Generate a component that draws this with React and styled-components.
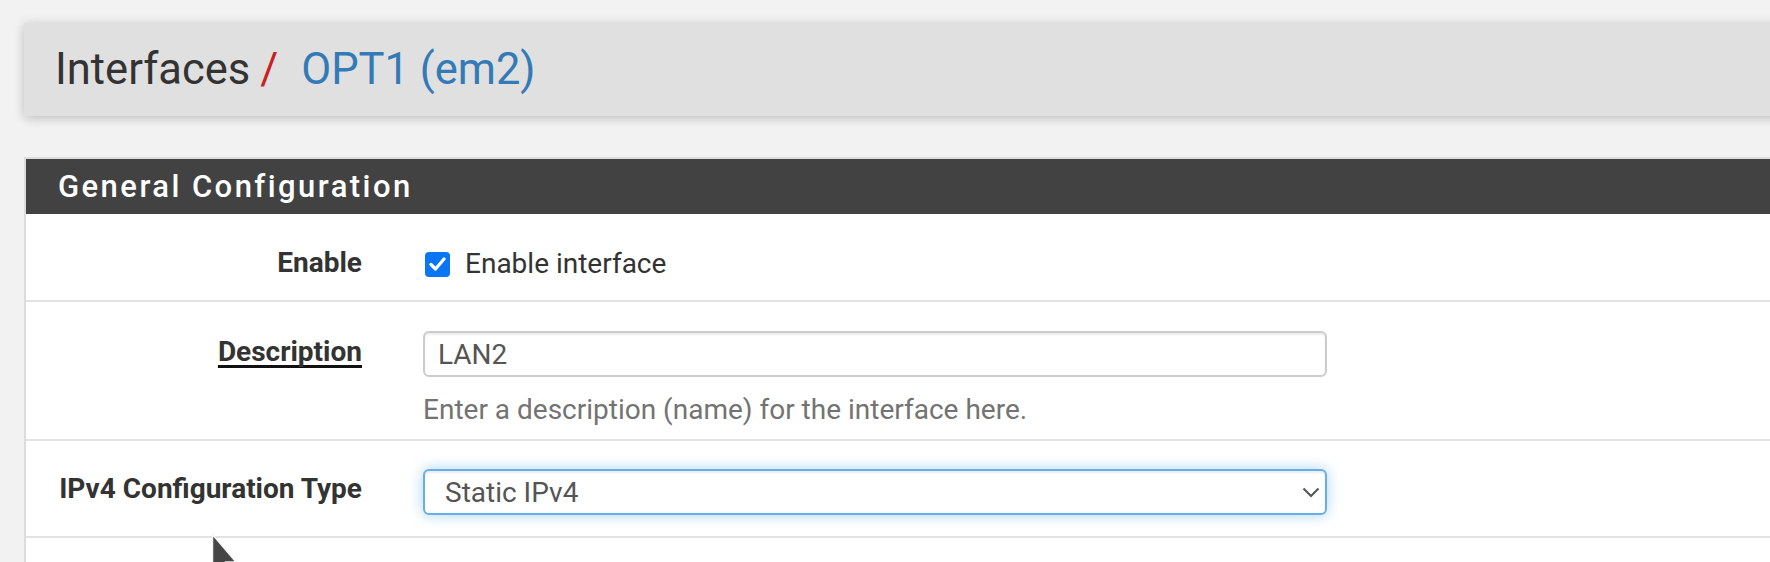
import React from "react";
import styled, { createGlobalStyle } from "styled-components";

const GlobalStyle = createGlobalStyle`
  html, body {
    margin: 0;
    padding: 0;
    background: #f2f2f2;
    overflow: hidden;
    font-family: Roboto, "Liberation Sans", Arial, sans-serif;
  }
  * { box-sizing: border-box; }
`;

const Page = styled.div`
  position: relative;
  width: 100vw;
  height: 562px;
  overflow: hidden;
  padding-top: 23px;
`;

const Content = styled.div`
  margin-left: 24px;
  width: 1900px;
`;

const Breadcrumb = styled.div`
  height: 93px;
  background: #e0e0e0;
  box-shadow: 0 2px 10px rgba(0, 0, 0, 0.22);
  display: flex;
  align-items: center;
  padding-left: 31px;
  font-size: 43.5px;
  font-weight: 400;
  color: #333;
`;

const Crumb = styled.span`
  color: ${(p) => p.$color || "#333"};
`;

const Sep = styled.span`
  color: #c9211e;
  margin: 0 23px 0 10px;
`;

const Panel = styled.div`
  margin-top: 41px;
  border: 2px solid #dcdcdc;
  border-right: none;
  background: #fff;
`;

const PanelHeading = styled.div`
  height: 55px;
  background: #424242;
  display: flex;
  align-items: center;
  padding-left: 32px;
`;

const PanelTitle = styled.h2`
  margin: 0;
  color: #fff;
  font-size: 31px;
  font-weight: 500;
  letter-spacing: 2.45px;
`;

const PanelBody = styled.div`
  padding-bottom: 60px;
`;

const FormRow = styled.div`
  display: grid;
  grid-template-columns: 367px 904px;
  padding-top: ${(p) => p.$pt}px;
  padding-bottom: ${(p) => p.$pb}px;
  border-bottom: 2px solid #e2e2e2;
`;

const Label = styled.div`
  text-align: right;
  padding-right: 31px;
  padding-top: ${(p) => p.$pt || 0}px;
  font-size: 28px;
  line-height: 40px;
  font-weight: 700;
  color: #333;
`;

const Underlined = styled.span`
  text-decoration: underline;
  text-decoration-thickness: 2.5px;
  text-underline-offset: 4px;
  text-decoration-skip-ink: none;
  text-decoration-color: #111;
`;

const Control = styled.div`
  padding-left: 30px;
  display: flex;
  flex-direction: column;
`;

const CheckLine = styled.label`
  display: flex;
  align-items: center;
  height: 40px;
  gap: 15px;
  font-size: 28px;
  color: #333;
`;

const CheckBox = styled.span`
  width: 25px;
  height: 25px;
  margin-left: 2px;
  margin-top: 2px;
  border-radius: 4px;
  background: #0b76f4;
  display: inline-flex;
  align-items: center;
  justify-content: center;
`;

const TextInput = styled.input`
  width: 904px;
  height: 46px;
  border: 2px solid #cccccc;
  border-radius: 6px;
  padding: 0 13px;
  font-family: inherit;
  font-size: 28px;
  color: #555;
  background: #fff;
  box-shadow: inset 0 2px 2px rgba(0, 0, 0, 0.075);
  outline: none;
`;

const HelpText = styled.div`
  margin-top: 13px;
  font-size: 28px;
  line-height: 40px;
  color: #737373;
`;

const SelectWrap = styled.div`
  position: relative;
  width: 904px;
  height: 46px;
`;

const Select = styled.select`
  appearance: none;
  width: 100%;
  height: 46px;
  border: 2px solid #66afe9;
  border-radius: 6px;
  padding: 0 0 0 20px;
  font-family: inherit;
  font-size: 28px;
  color: #555;
  background: #fff;
  box-shadow: inset 0 2px 2px rgba(0, 0, 0, 0.075), 0 0 14px rgba(102, 175, 233, 0.55);
  outline: none;
`;

const Chevron = styled.svg`
  position: absolute;
  right: 7px;
  top: 18px;
  pointer-events: none;
`;

const Cursor = styled.svg`
  position: absolute;
  left: 211px;
  top: 533px;
`;

export default function App() {
  return (
    <>
      <GlobalStyle />
      <Page>
        <Content>
          <Breadcrumb>
            <Crumb>Interfaces</Crumb>
            <Sep>/</Sep>
            <Crumb $color="#337ab7">OPT1 (em2)</Crumb>
          </Breadcrumb>
          <Panel>
            <PanelHeading>
              <PanelTitle>General Configuration</PanelTitle>
            </PanelHeading>
            <PanelBody>
              <FormRow $pt={29} $pb={17}>
                <Label>Enable</Label>
                <Control>
                  <CheckLine>
                    <CheckBox>
                      <svg width="17" height="14" viewBox="0 0 17 14">
                        <path d="M2 7.5 L6.5 12 L15 2" fill="none" stroke="#fff" strokeWidth="3.2" strokeLinecap="round" strokeLinejoin="round" />
                      </svg>
                    </CheckBox>
                    Enable interface
                  </CheckLine>
                </Control>
              </FormRow>
              <FormRow $pt={29} $pb={9}>
                <Label $pt={1}>
                  <Underlined>Description</Underlined>
                </Label>
                <Control>
                  <TextInput defaultValue="LAN2" readOnly />
                  <HelpText>Enter a description (name) for the interface here.</HelpText>
                </Control>
              </FormRow>
              <FormRow $pt={28} $pb={21}>
                <Label $pt={0}>IPv4 Configuration Type</Label>
                <Control>
                  <SelectWrap>
                    <Select defaultValue="staticv4">
                      <option value="none">None</option>
                      <option value="staticv4">Static IPv4</option>
                      <option value="dhcp">DHCP</option>
                    </Select>
                    <Chevron width="18" height="11" viewBox="0 0 18 11">
                      <path d="M1.5 1.5 L9 9 L16.5 1.5" fill="none" stroke="#555" strokeWidth="2" />
                    </Chevron>
                  </SelectWrap>
                </Control>
              </FormRow>
            </PanelBody>
          </Panel>
        </Content>
        <Cursor width="34" height="44" viewBox="0 0 34 44">
          <path d="M1.5 1.5 L1.5 38 L9.5 30.5 L15 42 L20 40 L14.5 29 L25 29 Z" fill="#454545" stroke="#f5f5f5" strokeWidth="1.5" strokeLinejoin="round" />
        </Cursor>
      </Page>
    </>
  );
}
